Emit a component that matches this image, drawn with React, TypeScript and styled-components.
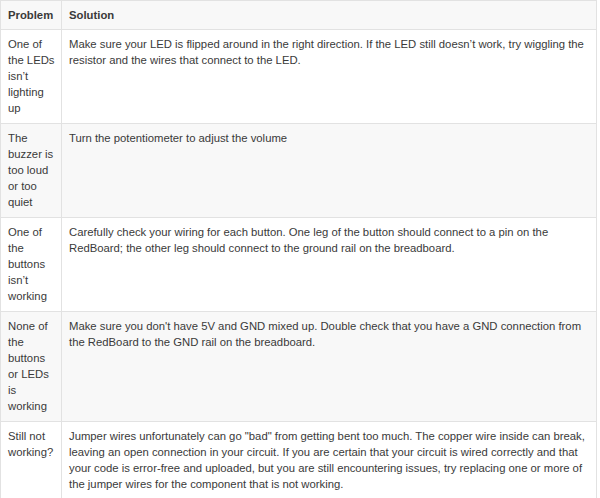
import React from 'react';
import styled, { createGlobalStyle } from 'styled-components';

const GlobalStyle = createGlobalStyle`
    body {
        margin: 0;
        background: #fff;
        font-family: "Liberation Sans", Arial, sans-serif;
    }
`;

const rows = [
    {
        problem: 'One of the LEDs isn’t lighting up',
        solution: 'Make sure your LED is flipped around in the right direction. If the LED still doesn’t work, try wiggling the resistor and the wires that connect to the LED.',
    },
    {
        problem: 'The buzzer is too loud or too quiet',
        solution: 'Turn the potentiometer to adjust the volume',
    },
    {
        problem: 'One of the buttons isn’t working',
        solution: 'Carefully check your wiring for each button. One leg of the button should connect to a pin on the RedBoard; the other leg should connect to the ground rail on the breadboard.',
    },
    {
        problem: 'None of the buttons or LEDs is working',
        solution: "Make sure you don't have 5V and GND mixed up. Double check that you have a GND connection from the RedBoard to the GND rail on the breadboard.",
    },
    {
        problem: 'Still not working?',
        solution: 'Jumper wires unfortunately can go "bad" from getting bent too much. The copper wire inside can break, leaving an open connection in your circuit. If you are certain that your circuit is wired correctly and that your code is error-free and uploaded, but you are still encountering issues, try replacing one or more of the jumper wires for the component that is not working.',
    },
];

export default function App() {
    return (
        <>
            <GlobalStyle />
            <Table>
                <colgroup>
                    <col style={{ width: 61 }} />
                    <col />
                </colgroup>
                <thead>
                    <Row $shaded>
                        <Th>Problem</Th>
                        <Th>Solution</Th>
                    </Row>
                </thead>
                <tbody>
                    {rows.map((r, i) => (
                        <Row key={i} $shaded={i % 2 === 1}>
                            <Td>{r.problem}</Td>
                            <Td>{r.solution}</Td>
                        </Row>
                    ))}
                </tbody>
            </Table>
        </>
    );
}

const Table = styled.table`
    width: 597px;
    table-layout: fixed;
    border-collapse: collapse;
    font-size: 11.3px;
    line-height: 16px;
    color: #3a3a3a;
`;

const Row = styled.tr<{ $shaded?: boolean }>`
    background: ${p => (p.$shaded ? '#f8f8f8' : '#fff')};
`;

const Th = styled.th`
    text-align: left;
    font-weight: bold;
    padding: 6px 5px 6px 7px;
    border: 1px solid #e2e2e2;
    vertical-align: top;
`;

const Td = styled.td`
    padding: 6px 5px 7px 7px;
    border: 1px solid #e2e2e2;
    vertical-align: top;
`;
